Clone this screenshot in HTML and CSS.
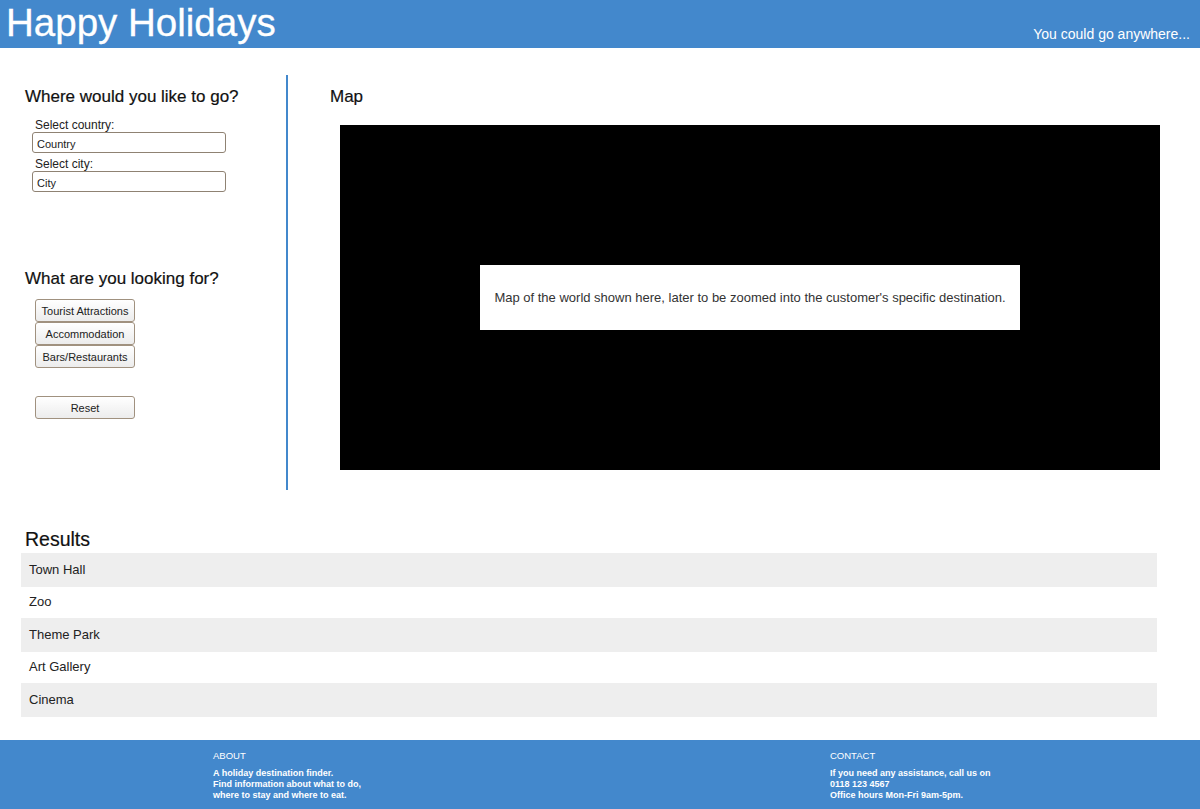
FILE: index.html
```html
<!DOCTYPE html>
<html>
<head>
<meta charset="utf-8">
<title>Happy Holidays</title>
<link rel="stylesheet" href="styles.css">
</head>
<body>
<header class="topbar">
  <h1 class="brand">Happy Holidays</h1>
  <div class="tagline">You could go anywhere...</div>
</header>

<main class="main">
  <aside class="side">
    <h2 class="side-title">Where would you like to go?</h2>
    <div class="fields">
      <label class="lbl">Select country:</label>
      <input class="inp" type="text" value="Country">
      <label class="lbl">Select city:</label>
      <input class="inp" type="text" value="City">
    </div>
    <h2 class="side-title second">What are you looking for?</h2>
    <div class="btns">
      <button class="btn">Tourist Attractions</button>
      <button class="btn">Accommodation</button>
      <button class="btn">Bars/Restaurants</button>
      <button class="btn reset">Reset</button>
    </div>
  </aside>
  <section class="mapcol">
    <h2 class="map-title">Map</h2>
    <div class="map">
      <div class="map-note">Map of the world shown here, later to be zoomed into the customer's specific destination.</div>
    </div>
  </section>
</main>

<section class="results">
  <h2 class="results-title">Results</h2>
  <ul class="rows">
    <li class="row odd">Town Hall</li>
    <li class="row">Zoo</li>
    <li class="row odd">Theme Park</li>
    <li class="row">Art Gallery</li>
    <li class="row odd">Cinema</li>
  </ul>
</section>

<footer class="foot">
  <div class="fcol about">
    <div class="fhead">ABOUT</div>
    <p class="ftext">A holiday destination finder.<br>Find information about what to do,<br>where to stay and where to eat.</p>
  </div>
  <div class="fcol contact">
    <div class="fhead">CONTACT</div>
    <p class="ftext">If you need any assistance, call us on<br>0118 123 4567<br>Office hours Mon-Fri 9am-5pm.</p>
  </div>
</footer>
</body>
</html>
```

FILE: styles.css
```css
* { box-sizing: border-box; }
html, body { margin: 0; padding: 0; }
body {
  font-family: "Liberation Sans", Arial, sans-serif;
  color: #111;
  background: #fff;
  width: 1200px;
  height: 809px;
  overflow: hidden;
}

.topbar {
  height: 48px;
  background: #4388cc;
  display: flex;
  justify-content: space-between;
  align-items: flex-end;
  padding: 0 10px 0 6px;
}
.brand {
  margin: 0;
  align-self: flex-start;
  font-weight: normal;
  font-size: 38.5px;
  line-height: 45px;
  color: #fff;
  -webkit-text-stroke: 0.3px #fff;
}
.tagline {
  color: #fff;
  font-size: 14px;
  padding-bottom: 6px;
}

.main {
  display: flex;
  margin-top: 27px;
  height: 415px;
}
.side {
  width: 288px;
  border-right: 2px solid #4388cc;
  padding-left: 25px;
}
.side-title {
  margin: 0;
  font-size: 17px;
  line-height: 20px;
  font-weight: normal;
  padding-top: 12px;
  color: #111;
  -webkit-text-stroke: 0.2px #111;
}
.side-title.second {
  padding-top: 73px;
}
.fields {
  display: flex;
  flex-direction: column;
  align-items: flex-start;
  padding-left: 10px;
  padding-top: 11px;
}
.lbl {
  font-size: 12px;
  line-height: 14px;
  color: #222;
}
.inp {
  margin: 0 0 4px -3px;
  width: 194px;
  height: 21px;
  border: 1px solid #8f8273;
  border-radius: 3px;
  font-family: "Liberation Sans", Arial, sans-serif;
  font-size: 11px;
  padding: 2px 4px 0;
  color: #222;
  background: #fff;
}
.btns {
  display: flex;
  flex-direction: column;
  align-items: flex-start;
  padding-left: 10px;
  padding-top: 10px;
}
.btn {
  width: 100px;
  height: 23px;
  margin: 0;
  padding: 0;
  border: 1px solid #a0917f;
  border-radius: 3px;
  background: linear-gradient(#ffffff, #ececec);
  font-family: "Liberation Sans", Arial, sans-serif;
  font-size: 11px;
  color: #222;
}
.btn.reset {
  margin-top: 28px;
}

.mapcol {
  flex: 1;
  padding-left: 42px;
}
.map-title {
  margin: 0;
  font-size: 17px;
  line-height: 20px;
  font-weight: normal;
  padding-top: 12px;
  color: #111;
  -webkit-text-stroke: 0.2px #111;
}
.map {
  margin: 18px 0 0 10px;
  width: 820px;
  height: 345px;
  background: #000;
  padding: 140px;
}
.map-note {
  background: #fff;
  height: 65px;
  display: flex;
  align-items: center;
  justify-content: center;
  font-size: 13px;
  color: #333;
}

.results {
  padding: 38px 0 0 21px;
}
.results-title {
  margin: 0 0 0 4px;
  font-size: 19.5px;
  line-height: 22px;
  font-weight: normal;
  color: #111;
  -webkit-text-stroke: 0.2px #111;
}
.rows {
  list-style: none;
  margin: 3px 0 0;
  padding: 0;
  width: 1136px;
}
.row {
  height: 31px;
  line-height: 30px;
  padding-left: 8px;
  font-size: 13px;
  color: #222;
}
.row.odd {
  height: 34px;
  line-height: 34px;
  background: #eeeeee;
}

.foot {
  position: absolute;
  left: 0;
  top: 740px;
  width: 1200px;
  height: 69px;
  background: #4388cc;
  color: #fff;
  display: flex;
  padding-top: 10px;
}
.fcol.about { margin-left: 213px; width: 617px; }
.fhead {
  font-size: 9.5px;
  line-height: 12px;
}
.ftext {
  margin: 6px 0 0;
  font-size: 9px;
  line-height: 11px;
  font-weight: bold;
}
```
